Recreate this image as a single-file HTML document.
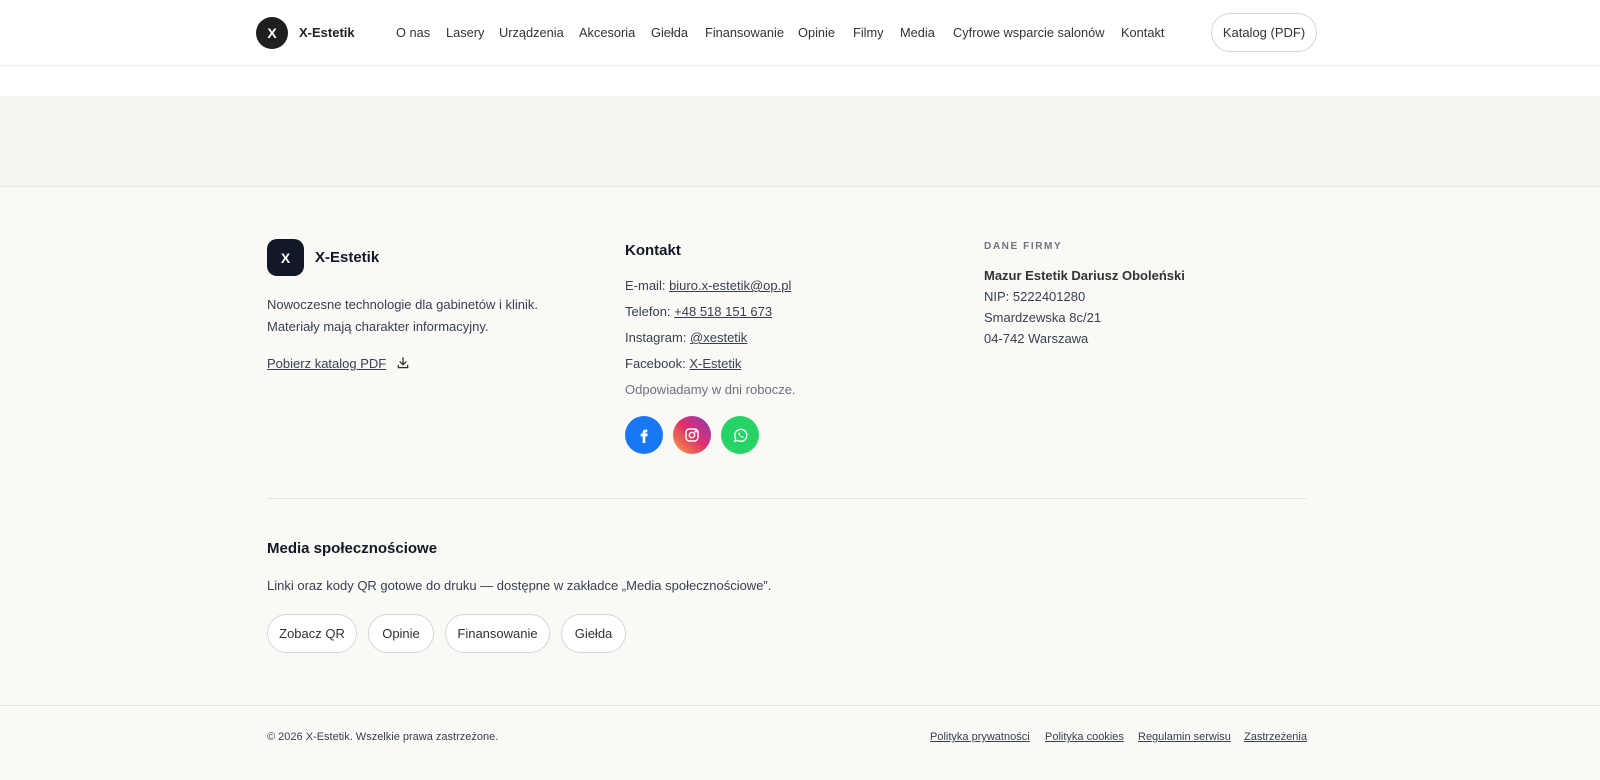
<!DOCTYPE html>
<html><head><meta charset="utf-8"><style>
*{margin:0;padding:0;box-sizing:border-box}
body{width:1600px;height:780px;overflow:hidden;background:#faf9f6;font-family:"Liberation Sans",sans-serif;color:#374151;position:relative}
.a{position:absolute;white-space:nowrap}
a{color:inherit}
header{position:absolute;left:0;top:0;width:1600px;height:66px;background:#fff;border-bottom:1px solid #ececec}
.nav span{position:absolute;top:25px;font-size:12.8px;color:#333}
.pill{position:absolute;border:1px solid #d6d6d6;border-radius:20px;background:#fff;font-size:13px;color:#333;display:flex;align-items:center;justify-content:center}
.fs{font-size:13px}
</style></head><body>
<header>
<div class="a" style="left:256px;top:17px;width:32px;height:32px;border-radius:50%;background:#1f1f1f;color:#fff;font-weight:bold;font-size:14px;display:flex;align-items:center;justify-content:center">X</div>
<div class="a" style="left:299px;top:25px;font-size:13px;font-weight:bold;color:#1f1f1f">X-Estetik</div>
<div class="nav">
<span style="left:396px">O nas</span><span style="left:446px">Lasery</span><span style="left:499px">Urządzenia</span><span style="left:579px">Akcesoria</span><span style="left:651px">Giełda</span><span style="left:705px">Finansowanie</span><span style="left:798px">Opinie</span><span style="left:853px">Filmy</span><span style="left:900px">Media</span><span style="left:953px">Cyfrowe wsparcie salonów</span><span style="left:1121px">Kontakt</span>
</div>
<div class="pill" style="left:1211px;top:13px;width:106px;height:39px">Katalog (PDF)</div>
</header>
<div class="a" style="left:0;top:66px;width:1600px;height:30px;background:#fff"></div>
<div class="a" style="left:0;top:96px;width:1600px;height:91px;background:#f7f5ef;border-bottom:1px solid #e8e6e0"></div>

<div class="a" style="left:267px;top:239px;width:37px;height:37px;border-radius:10px;background:#111827;color:#fff;font-weight:bold;font-size:14px;display:flex;align-items:center;justify-content:center">X</div>
<div class="a" style="left:315px;top:249px;font-size:15px;font-weight:bold;color:#111827">X-Estetik</div>
<div class="a fs" style="left:267px;top:294px;line-height:22px">Nowoczesne technologie dla gabinetów i klinik.<br>Materiały mają charakter informacyjny.</div>
<div class="a fs" style="left:267px;top:356px"><u>Pobierz katalog PDF</u>
<svg width="14" height="14" viewBox="0 0 24 24" style="margin-left:6px;vertical-align:-2px" fill="none" stroke="#333" stroke-width="2.2" stroke-linecap="round"><path d="M12 3v12M7 10l5 5 5-5M4 16v4h16v-4"/></svg></div>

<div class="a" style="left:625px;top:242px;font-size:15px;font-weight:bold;color:#111827">Kontakt</div>
<div class="a fs" style="left:625px;top:278px">E-mail: <u>biuro.x-estetik@op.pl</u></div>
<div class="a fs" style="left:625px;top:304px">Telefon: <u>+48 518 151 673</u></div>
<div class="a fs" style="left:625px;top:330px">Instagram: <u>@xestetik</u></div>
<div class="a fs" style="left:625px;top:356px">Facebook: <u>X-Estetik</u></div>
<div class="a fs" style="left:625px;top:382px;color:#6b7280">Odpowiadamy w dni robocze.</div>
<div class="a" style="left:625px;top:416px;width:38px;height:38px;border-radius:50%;background:#1877f2;display:flex;align-items:center;justify-content:center"><svg width="16" height="16" viewBox="0 0 24 24" fill="#fff"><path d="M14 8h3V4h-3c-2.8 0-4 1.8-4 4.3V10H7v4h3v10h4V14h3l.6-4H14V8.6c0-.4.3-.6.6-.6z"/></svg></div>
<div class="a" style="left:673px;top:416px;width:38px;height:38px;border-radius:50%;background:linear-gradient(45deg,#f9a23a,#e1306c 50%,#8a3ab9);display:flex;align-items:center;justify-content:center"><svg width="16" height="16" viewBox="0 0 24 24" fill="none" stroke="#fff" stroke-width="2.2"><rect x="3" y="3" width="18" height="18" rx="5"/><circle cx="12" cy="12" r="4"/><circle cx="17.5" cy="6.5" r=".8" fill="#fff"/></svg></div>
<div class="a" style="left:721px;top:416px;width:38px;height:38px;border-radius:50%;background:#25d366;display:flex;align-items:center;justify-content:center"><svg width="17" height="17" viewBox="0 0 24 24" fill="none" stroke="#fff" stroke-width="2"><path d="M4 20l1.2-3.8A8.5 8.5 0 1 1 8 19z"/><path d="M9 8.5c0 3.5 3 6.5 6.5 6.5l1-1.5-2-1-1 1c-1.2-.5-2.3-1.6-2.8-2.8l1-1-1-2z" fill="#fff" stroke="none"/></svg></div>

<div class="a" style="left:984px;top:241px;font-size:10px;font-weight:bold;letter-spacing:1.6px;color:#6b7280">DANE FIRMY</div>
<div class="a fs" style="left:984px;top:265px;line-height:21px"><b style="color:#333">Mazur Estetik Dariusz Oboleński</b><br>NIP: 5222401280<br>Smardzewska 8c/21<br>04-742 Warszawa</div>

<div class="a" style="left:267px;top:498px;width:1039px;height:1px;background:#e5e3dd"></div>
<div class="a" style="left:267px;top:540px;font-size:15px;font-weight:bold;color:#111827">Media społecznościowe</div>
<div class="a fs" style="left:267px;top:578px">Linki oraz kody QR gotowe do druku — dostępne w zakładce „Media społecznościowe”.</div>
<div class="pill" style="left:267px;top:614px;width:90px;height:39px">Zobacz QR</div>
<div class="pill" style="left:368px;top:614px;width:66px;height:39px">Opinie</div>
<div class="pill" style="left:445px;top:614px;width:105px;height:39px">Finansowanie</div>
<div class="pill" style="left:561px;top:614px;width:65px;height:39px">Giełda</div>

<div class="a" style="left:0;top:705px;width:1600px;height:1px;background:#e5e3dd"></div>
<div class="a" style="left:267px;top:731px;font-size:11px">© 2026 X-Estetik. Wszelkie prawa zastrzeżone.</div>
<div class="a" style="left:930px;top:731px;font-size:11px"><u>Polityka prywatności</u></div>
<div class="a" style="left:1045px;top:731px;font-size:11px"><u>Polityka cookies</u></div>
<div class="a" style="left:1138px;top:731px;font-size:11px"><u>Regulamin serwisu</u></div>
<div class="a" style="left:1244px;top:731px;font-size:11px"><u>Zastrzeżenia</u></div>
</body></html>
